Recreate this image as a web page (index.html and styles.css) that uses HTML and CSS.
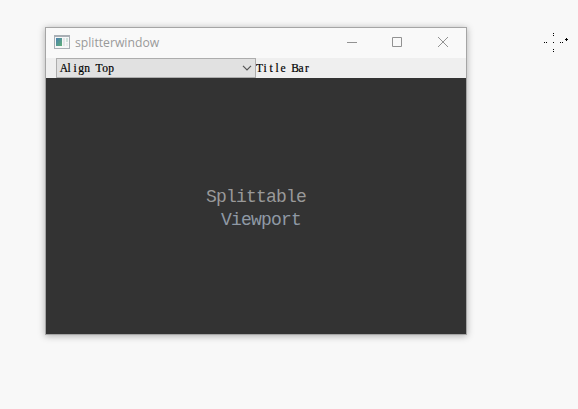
FILE: index.html
```
<!DOCTYPE html>
<html lang="en">
<head>
<meta charset="utf-8">
<title>splitterwindow</title>
<link rel="stylesheet" href="styles.css">
</head>
<body>
<main class="window">
  <header class="titlebar">
    <svg class="app-icon" width="16" height="14" viewBox="0 0 16 14" shape-rendering="crispEdges">
      <defs><linearGradient id="pane" x1="0" y1="0" x2="1" y2="1"><stop offset="0" stop-color="#4b80b0"/><stop offset="1" stop-color="#5fb078"/></linearGradient></defs>
      <path fill="#a9afb5" d="M0 0h16v14H0z"/><path fill="#f6f7f8" d="M1 2h14v11H1z"/>
      <path fill="url(#pane)" d="M2 3h6v8H2z"/><path fill="#e3e6e8" d="M9 3h2v8H9z"/><path fill="#cfe2dc" d="M12 3h2v4h-2z"/><path fill="#e9ecee" d="M12 8h2v3h-2z"/>
    </svg>
    <span class="title">splitterwindow</span>
    <nav class="controls">
      <svg width="12" height="12" viewBox="0 0 12 12"><path d="M2 5.5h10"/></svg>
      <svg width="12" height="12" viewBox="0 0 12 12"><path d="M1.5 .5h9v9h-9z"/></svg>
      <svg width="12" height="12" viewBox="0 0 12 12"><path d="M1 0l10 10M11 0L1 10"/></svg>
    </nav>
  </header>
  <div class="toolbar">
    <div class="combo">
      <svg class="label" width="60" height="18"><text y="13" x="5 10 16 22 28 34 40 46 52">Align Top</text></svg>
      <svg class="chevron" width="10" height="6" viewBox="0 0 10 6"><path d="M1 .8l4 4 4-4"/></svg>
    </div>
    <svg class="label" width="60" height="20"><text y="14" x="3.5 9 15 21 27 33 39 45 51">Title Bar</text></svg>
  </div>
  <section class="viewport">
    <div class="caption"><div>Splittable</div><div class="second">Viewport</div></div>
  </section>
</main>
<svg class="cursor" width="26" height="22" viewBox="0 0 26 22" shape-rendering="crispEdges"><path d="M10 1h1v1h-1zM10 3h1v1h-1zM1 10h1v1h-1zM3 10h1v1h-1zM10 10h1v1h-1zM17 10h1v1h-1zM19 10h1v1h-1zM22 7h3v1h-3zM23 6h1v3h-1zM10 17h1v1h-1zM10 19h1v1h-1z"/></svg>
</body>
</html>
```
FILE: styles.css
```
* { box-sizing: border-box; }
body { margin: 0; height: 409px; padding: 27px 0 0 45px; overflow: hidden; background: #f8f8f8; }
svg { display: block; flex: none; }
.window { width: 422px; height: 308px; border: 1px solid #a5a5a5; box-shadow: 0 1px 7px rgba(0, 0, 0, .3); display: flex; flex-direction: column; }
.titlebar { height: 30px; display: flex; align-items: center; padding-left: 8px; background: #f9f9f9; }
.app-icon { margin-top: -2px; }
.title { margin-left: 5px; font: 12.2px/18px "Open Sans", sans-serif; color: #999; }
.controls { margin-left: auto; display: flex; gap: 34px; padding-right: 17px; }
.controls path { fill: none; stroke: #929292; }
.toolbar { height: 20px; display: flex; padding-left: 10px; background: #efefef; }
.combo { width: 200px; border: 1px solid #adadad; background: #e1e1e1; display: flex; align-items: center; justify-content: space-between; padding: 0 3px 0 2px; }
.chevron path { fill: none; stroke: #555; stroke-width: 1.2; }
.label { font: 11.5px "Liberation Serif", serif; fill: #000; stroke: #000; stroke-width: .2; text-anchor: middle; }
.viewport { flex: 1; background: #333; display: flex; justify-content: center; padding-top: 108px; }
.caption { width: 100px; font: 18px/23px "Liberation Mono", monospace; letter-spacing: -.8px; color: #999; white-space: nowrap; }
.caption .second { padding-left: 15px; color: #8f99a5; }
.cursor { position: absolute; left: 543px; top: 32px; }
```
